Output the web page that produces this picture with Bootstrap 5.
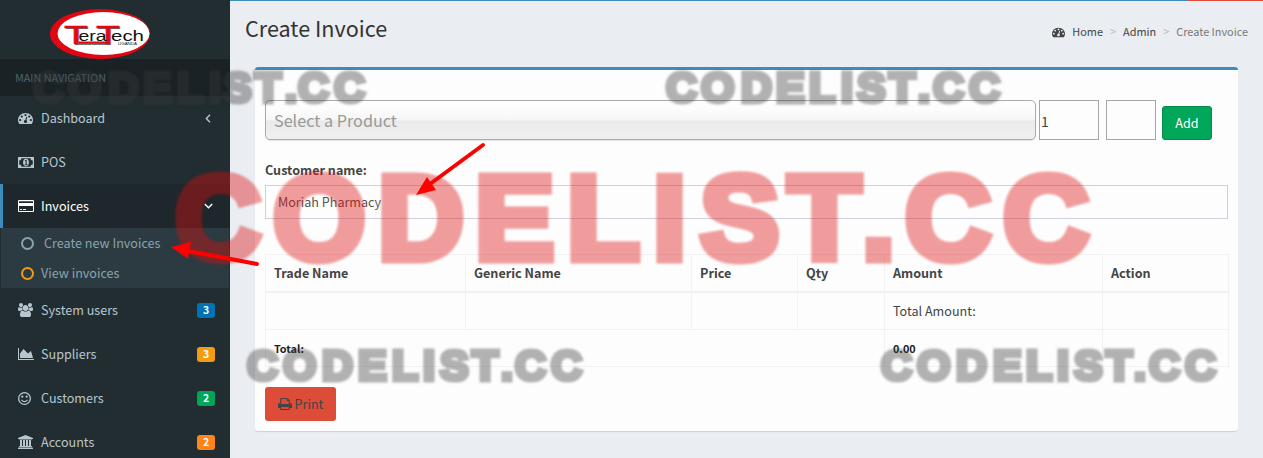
<!DOCTYPE html>
<html lang="en">
<head>
<meta charset="utf-8">
<meta name="viewport" content="width=device-width, initial-scale=1">
<title>Create Invoice</title>
<link href="https://cdn.jsdelivr.net/npm/bootstrap@5.3.0/dist/css/bootstrap.min.css" rel="stylesheet">
<style>
html,body{height:458px;overflow:hidden}
body{font-family:"Noto Sans CJK SC","Source Sans Pro",sans-serif;font-size:12.6px;line-height:20px;color:#444;background:#eaedf2;position:relative}
a{text-decoration:none;color:inherit}
.side{width:230px;height:458px;background:#222d32;color:#b8c7ce;overflow:hidden}
.brand{height:59px;padding:9px 0 0 50px}
.brand svg{display:block}
.side-title{height:37px;background:#1a2226;color:#4b646f;font-size:10.8px;line-height:37px;padding-left:15px}
.side-link{height:44px;padding:0 15px 0 15px;border-left:3px solid transparent;flex:none}
.side-link .ico{width:23px}
.side-link.current{background:#1e282c;border-left-color:#3c8dbc;color:#fff}
.side-link svg,.crumbs svg,.print svg{fill:currentColor;display:block}
.sub{background:#2c3b41;color:#8aa4af;margin:0 1px;height:60px}
.sub a{height:30px;padding-left:20px}
.ring{width:13px;height:13px;border:2px solid #8aa4af;border-radius:50%;margin-right:7px}
.tag{width:18px;height:15px;border-radius:3px;color:#fff;font-weight:700;font-size:10.4px;line-height:14px;text-align:center}
.main{height:458px;border-top:1px solid #3c8dbc;position:relative}
.main:before{content:"";position:absolute;top:-1px;right:0;width:76px;height:1px;background:#dd4b39}
.head{height:66px;padding:14px 15px 0 15px}
.head h1{font-size:21.6px;line-height:26px;margin:0;font-weight:400;color:#333}
.crumbs{font-size:10.9px;line-height:17px;margin-top:8px}
.crumbs .sep{color:#bbb;padding:0 7px;font-size:11px}
.panel{margin:0 25px;width:983px;height:364px;border-top:3px solid #3c8dbc;border-radius:3px;background:#fdfdfd;box-shadow:0 1px 1px rgba(0,0,0,.13);padding:30px 10px 0}
.picker{width:771px;height:40px;border:1px solid #aaa;border-radius:5px;background:linear-gradient(#fdfdfd 20%,#f6f6f6 50%,#eaeaea 52%,#f0f0f0);font-size:16.2px;line-height:38px;padding-left:8px;color:#999;box-shadow:0 1px 1px rgba(0,0,0,.1)}
.box-in{height:40px;border:1px solid #a6a6a6;background:#fdfdfd;font-size:14px;line-height:41px;padding-left:1px}
.add{width:50px;height:34px;background:#00a65a;border:1px solid #008d4c;border-radius:3px;color:#fff;font-size:12.6px;padding:0;line-height:32px;margin-top:6px}
.cust{height:34px;border:1px solid #ced1dd;padding:0 12px;line-height:32px;color:#555;font-size:12.6px}
.inv{width:963px;table-layout:fixed;border-collapse:collapse;margin:35px 0 0}
.inv th,.inv td{border:1px solid #f2f2f2;padding:8px;line-height:20px;vertical-align:top;height:37px}
.inv th{border-bottom-width:2px;font-weight:700}
.inv .sum td{font-weight:700;font-size:10.8px;color:#222}
.print{width:71px;height:34px;background:#dd4b39;border-radius:3px;margin-top:20px;color:#444}
.print svg{margin-right:3px}
.overlay{position:absolute;left:0;top:0;pointer-events:none}
</style>
</head>
<body>
<div class="d-flex">
<aside class="side d-flex flex-column flex-shrink-0">
 <div class="brand flex-shrink-0">
  <svg width="100" height="50" viewBox="0 0 100 50">
   <ellipse cx="50" cy="25" rx="50" ry="25" fill="#e20613"/><ellipse cx="53.5" cy="24.5" rx="46" ry="21.5" fill="#fff"/>
   <path d="M26 34.500H60" stroke="#777" stroke-width="3"/><path d="M25 33.500H59" stroke="#e20613" stroke-width="2"/>
   <g font-family="Liberation Sans" font-size="26">
    <g fill="#666"><text x="15" y="35.500" textLength="24" lengthAdjust="spacingAndGlyphs">T</text><text x="47" y="35.500" textLength="24" lengthAdjust="spacingAndGlyphs">T</text></g>
    <g fill="#e20613" stroke="#e20613" stroke-width=".5"><text x="14" y="34.500" textLength="24" lengthAdjust="spacingAndGlyphs">T</text><text x="46" y="34.500" textLength="24" lengthAdjust="spacingAndGlyphs">T</text></g>
   </g>
   <g font-family="Liberation Sans" fill="#111"><text x="28.500" y="32" font-size="14" textLength="28" lengthAdjust="spacingAndGlyphs">era</text><text x="61" y="32" font-size="14" textLength="33" lengthAdjust="spacingAndGlyphs">ech</text><text x="68" y="36" font-size="3.600" textLength="19" lengthAdjust="spacingAndGlyphs">UGANDA</text></g>
  </svg>
 </div>
 <div class="side-title flex-shrink-0">MAIN NAVIGATION</div>
 <a class="side-link d-flex align-items-center" href="#"><span class="ico"><svg width="15" height="14" viewBox="0 0 1792 1792" preserveAspectRatio="none"><path id="gauge" d="M384 1152q0-53-37.500-90.500t-90.500-37.500-90.500 37.500-37.500 90.500 37.500 90.500 90.500 37.500 90.500-37.500 37.500-90.500zm192-448q0-53-37.500-90.500t-90.500-37.500-90.500 37.500-37.500 90.500 37.500 90.500 90.500 37.500 90.500-37.500 37.500-90.500zm428 481l101-382q6-26-7.500-48.500t-38.500-29.500-48 6.500-30 39.500l-101 382q-60 5-107 43.500t-63 98.500q-20 77 20 146t117 89 146-20 89-117q16-60-6-117t-72-91zm660-33q0-53-37.500-90.500t-90.500-37.500-90.500 37.500-37.500 90.500 37.500 90.500 90.500 37.500 90.500-37.500 37.500-90.500zm-640-640q0-53-37.500-90.500t-90.500-37.500-90.500 37.500-37.500 90.500 37.500 90.500 90.500 37.500 90.500-37.500 37.500-90.500zm448 192q0-53-37.500-90.500t-90.500-37.500-90.500 37.500-37.500 90.500 37.500 90.500 90.500 37.500 90.500-37.500 37.500-90.500zm320 448q0 261-141 483-19 29-54 29h-1402q-35 0-54-29-141-221-141-483 0-182 71-348t191-286 286-191 348-71 348 71 286 191 191 286 71 348z"/></svg></span>Dashboard<svg class="ms-auto me-1" width="6" height="9" viewBox="0 0 6 9"><path d="M5 .8L1.300 4.500 5 8.200" fill="none" stroke="currentColor" stroke-width="1.400"/></svg></a>
 <a class="side-link d-flex align-items-center" href="#"><span class="ico"><svg width="16" height="11" viewBox="0 0 16 11"><path fill-rule="evenodd" d="M0 0h16v11H0zM3.500 1.200A2.300 2.300 0 0 1 1.200 3.500v4a2.300 2.300 0 0 1 2.300 2.300h9a2.300 2.300 0 0 1 2.300-2.300v-4a2.300 2.300 0 0 1-2.300-2.300z"/><ellipse cx="8" cy="5.500" rx="2.900" ry="3.700"/><path d="M6.900 4l1.300-.9V7.500M6.700 7.700h2.800" fill="none" stroke="#222d32"/></svg></span>POS</a>
 <a class="side-link current d-flex align-items-center" href="#"><span class="ico"><svg width="16" height="12" viewBox="0 0 16 12"><path fill-rule="evenodd" d="M1 0h14a1 1 0 0 1 1 1v10a1 1 0 0 1-1 1H1a1 1 0 0 1-1-1V1a1 1 0 0 1 1-1zM1 1.200V3h14V1.200zM1 6v5h14V6zM2 9h2v1H2zM5 9h3v1H5z"/></svg></span>Invoices<svg class="ms-auto" style="margin-right:2px" width="9" height="6" viewBox="0 0 9 6"><path d="M.8 1L4.500 4.700 8.200 1" fill="none" stroke="currentColor" stroke-width="1.500"/></svg></a>
 <div class="sub flex-shrink-0">
  <a class="d-flex align-items-center" href="#"><span class="ring"></span><span style="padding-left:3px">Create new Invoices</span></a>
  <a class="d-flex align-items-center" href="#"><span class="ring" style="border-color:#f39c12"></span>View invoices</a>
 </div>
 <a class="side-link d-flex align-items-center" href="#"><span class="ico"><svg width="15" height="14" viewBox="0 0 1920 1792"><path d="M593 896q-162 5-265 128h-134q-82 0-138-40.500t-56-118.500q0-353 124-353 6 0 43.500 21t97.500 42.500 119 21.500q67 0 133-23-5 37-5 66 0 139 81 256zm1071 637q0 120-73 189.500t-194 69.500h-874q-121 0-194-69.500t-73-189.500q0-53 3.500-103.500t14-109 26.500-108.500 43-97.500 62-81 85.500-53.500 111.500-20q10 0 43 21.500t73 48 107 48 135 21.500 135-21.500 107-48 73-48 43-21.500q61 0 111.500 20t85.500 53.500 62 81 43 97.500 26.500 108.500 14 109 3.500 103.500zm-1024-1277q0 106-75 181t-181 75-181-75-75-181 75-181 181-75 181 75 75 181zm704 384q0 159-112.500 271.500t-271.500 112.500-271.500-112.500-112.500-271.500 112.500-271.500 271.500-112.500 271.500 112.500 112.500 271.500zm576 225q0 78-56 118.500t-138 40.500h-134q-103-123-265-128 81-117 81-256 0-29-5-66 66 23 133 23 59 0 119-21.500t97.500-42.500 43.500-21q124 0 124 353zm-128-609q0 106-75 181t-181 75-181-75-75-181 75-181 181-75 181 75 75 181z"/></svg></span>System users<span class="tag ms-auto" style="background:#0073b7">3</span></a>
 <a class="side-link d-flex align-items-center" href="#"><span class="ico"><svg width="16" height="14" viewBox="0 0 2048 1792"><path d="M2048 1536v128h-2048v-1536h128v1408h1920zm-384-1024l256 896h-1664v-576l448-576 576 576z"/></svg></span>Suppliers<span class="tag ms-auto" style="background:#f39c12">3</span></a>
 <a class="side-link d-flex align-items-center" href="#"><span class="ico"><svg width="13" height="13" viewBox="0 0 12 12"><circle cx="6" cy="6" r="5.400" fill="none" stroke="currentColor" stroke-width="1.200"/><circle cx="4" cy="4.300" r="1"/><circle cx="8" cy="4.300" r="1"/><path d="M3.200 7.200Q6 10.600 8.800 7.200" fill="none" stroke="currentColor"/></svg></span>Customers<span class="tag ms-auto" style="background:#00a65a">2</span></a>
 <a class="side-link d-flex align-items-center" href="#"><span class="ico"><svg width="15" height="14" viewBox="0 0 1920 1792"><path d="M960 0l960 384v128h-128q0 26-20.500 45t-48.500 19h-1526q-28 0-48.500-19t-20.500-45h-128v-128zm-704 640h256v768h128v-768h256v768h128v-768h256v768h128v-768h256v768h59q28 0 48.500 19t20.500 45v64h-1664v-64q0-26 20.500-45t48.500-19h59v-768zm1595 960q28 0 48.500 19t20.500 45v128h-1920v-128q0-26 20.500-45t48.500-19h1782z"/></svg></span>Accounts<span class="tag ms-auto" style="background:#ff851b">2</span></a>
</aside>
<main class="main flex-grow-1">
 <div class="head d-flex justify-content-between align-items-start">
  <h1>Create Invoice</h1>
  <div class="crumbs d-flex align-items-center"><svg width="13" height="12" style="margin-right:7px" viewBox="0 0 1792 1792" preserveAspectRatio="none"><use href="#gauge"/></svg><a href="#">Home</a><span class="sep">&gt;</span><a href="#">Admin</a><span class="sep">&gt;</span><span style="color:#777">Create Invoice</span></div>
 </div>
 <section class="panel">
  <div class="d-flex">
   <div class="picker">Select a Product</div>
   <div class="box-in" style="width:60px;margin-left:3px">1</div>
   <div class="box-in" style="width:50px;margin-left:7px"></div>
   <button class="add" style="margin-left:6px">Add</button>
  </div>
  <div class="fw-bold" style="margin:20px 0 5px">Customer name:</div>
  <div class="cust">Moriah Pharmacy</div>
  <table class="inv">
   <colgroup><col style="width:200px"><col style="width:226px"><col style="width:106px"><col style="width:87px"><col style="width:218px"><col style="width:126px"></colgroup>
   <thead><tr><th>Trade Name</th><th>Generic Name</th><th>Price</th><th>Qty</th><th>Amount</th><th>Action</th></tr></thead>
   <tbody><tr><td></td><td></td><td></td><td></td><td>Total Amount:</td><td></td></tr>
   <tr class="sum"><td colspan="4">Total:</td><td>0.00</td><td></td></tr></tbody>
  </table>
  <a class="print d-flex align-items-center justify-content-center" href="#"><svg width="14" height="14" viewBox="64 0 1664 1792" preserveAspectRatio="none"><path d="M448 1536h896v-256h-896v256zm0-640h896v-384h-160q-40 0-68-28t-28-68v-160h-640v640zm1152 64q0-26-19-45t-45-19-45 19-19 45 19 45 45 19 45-19 19-45zm128 0v416q0 13-9.500 22.500t-22.500 9.500h-224v160q0 40-28 68t-68 28h-960q-40 0-68-28t-28-68v-160h-224q-13 0-22.500-9.500t-9.500-22.500v-416q0-79 56.500-135.500t135.500-56.500h64v-544q0-40 28-68t68-28h672q40 0 88 20t76 48l152 152q28 28 48 76t20 88v256h64q79 0 135.500 56.500t56.500 135.500z"/></svg>Print</a>
 </section>
</main>
</div>
<!-- Watermarks and pointer arrows laid over the page -->
<svg class="overlay" width="1263" height="458" viewBox="0 0 1263 458">
 <defs><filter id="soft"><feGaussianBlur stdDeviation=".8"/></filter></defs>
 <g font-family="Liberation Sans" font-weight="700">
  <g fill="#373737" stroke="#373737" stroke-width="5" font-size="43" filter="url(#soft)">
   <text opacity=".39" y="101.500" x="33 68 108 143 177 209 223 255 285 298 334">CODELIST.CC</text>
   <text opacity=".39" y="101.500" x="666 701 741 776 809 841 857 889 918 933 969">CODELIST.CC</text>
   <text opacity=".39" y="379.500" x="247 283 322 358 392 423 440 472 501 515 551">CODELIST.CC</text>
   <text opacity=".39" y="379.500" x="881 917 956 993 1026 1057 1074 1106 1134 1149 1185">CODELIST.CC</text>
  </g>
  <text fill="#dd0b0b" stroke="#dd0b0b" stroke-width="9" font-size="119" opacity=".405" filter="url(#soft)" y="258.500" x="175 273 378 475 567 653 700 788 862 905 1003">CODELIST.CC</text>
 </g>
 <g fill="red" stroke="red" stroke-linecap="round">
  <path d="M483 145L430 184" stroke-width="4"/><path d="M416 195L427 177 436 190z" stroke="none"/>
  <path d="M257 264L188 251" stroke-width="4"/><path d="M171 247L191 242 188 259z" stroke="none"/>
 </g>
</svg>
<script src="https://cdn.jsdelivr.net/npm/bootstrap@5.3.0/dist/js/bootstrap.bundle.min.js"></script>
</body>
</html>
